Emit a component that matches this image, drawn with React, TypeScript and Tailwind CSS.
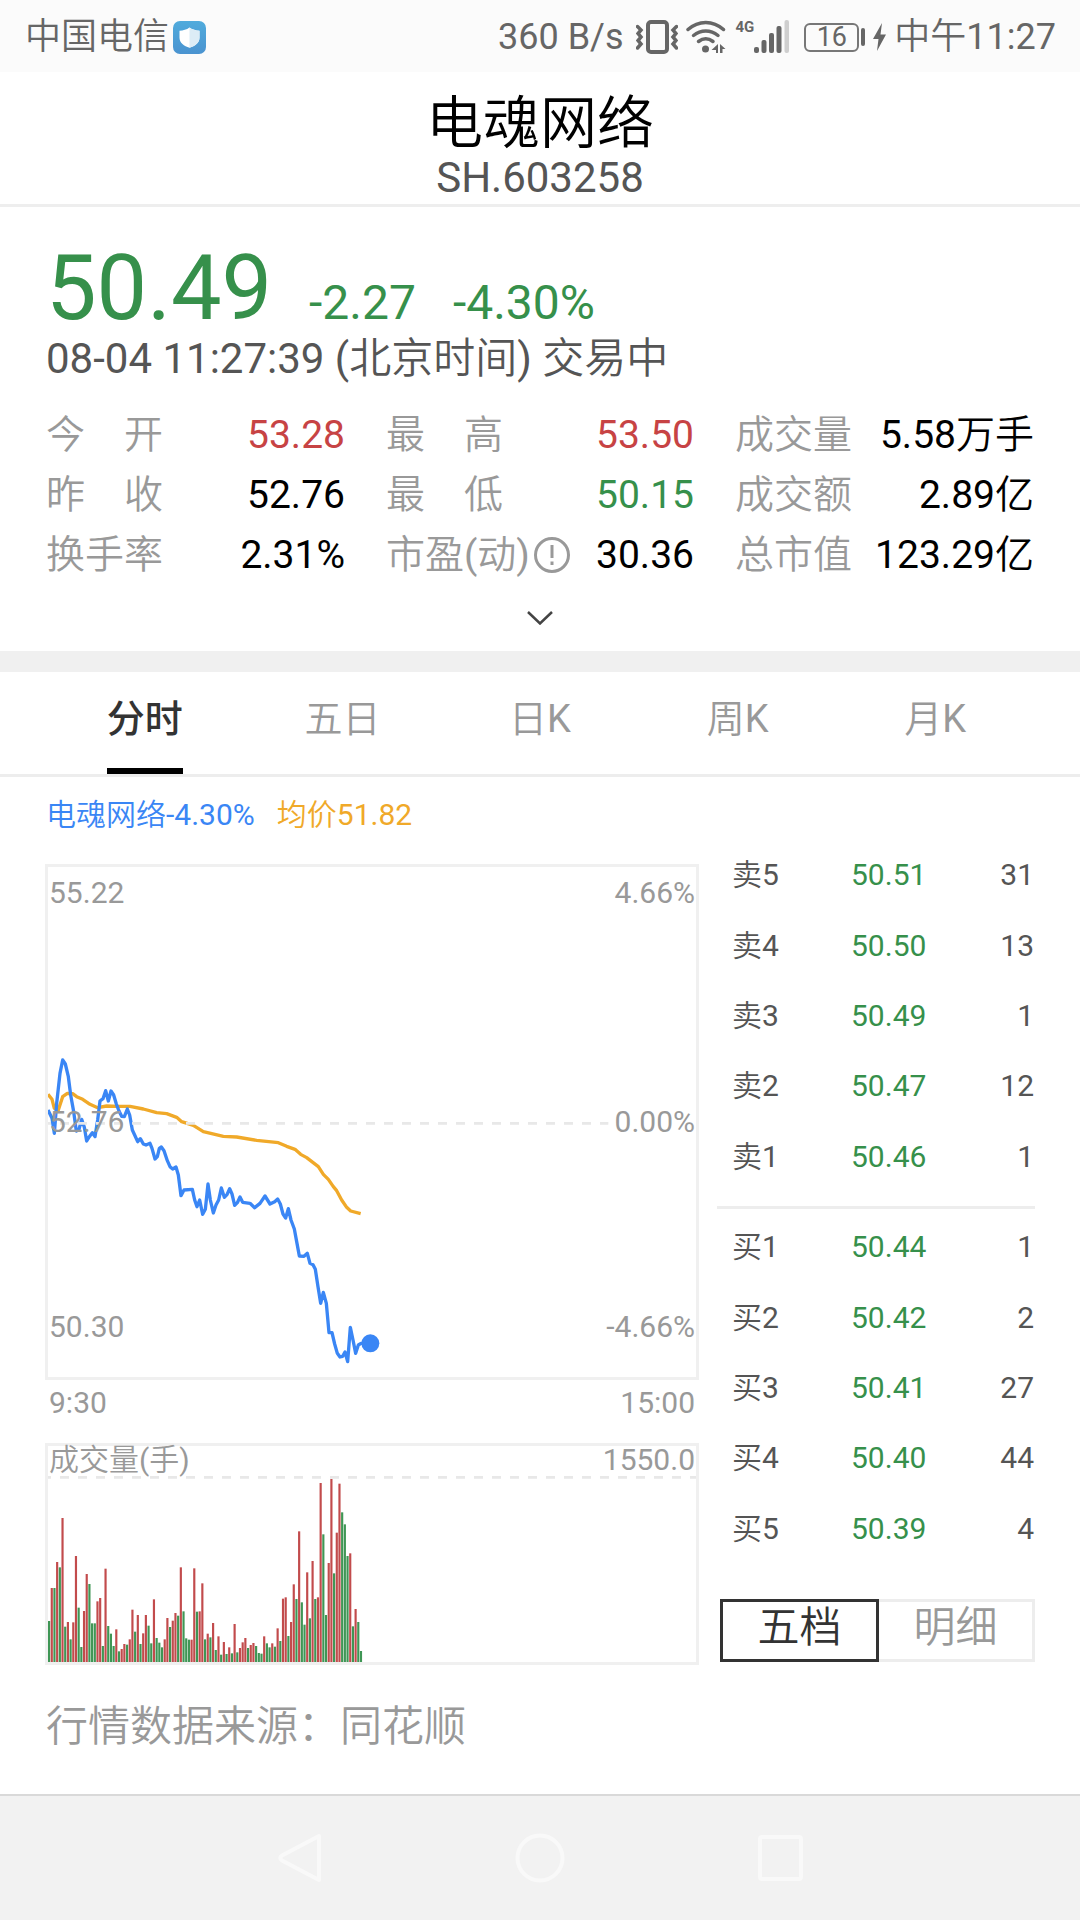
import { useState } from "react";
import { clsx } from "clsx";

type Tone = "up" | "down" | "flat";

const toneClass: Record<Tone, string> = {
  up: "text-[#c74344]",
  down: "text-[#36904b]",
  flat: "text-black",
};

const stats: { label: string; value: string; tone: Tone; info?: boolean }[] = [
  { label: "今　开", value: "53.28", tone: "up" },
  { label: "最　高", value: "53.50", tone: "up" },
  { label: "成交量", value: "5.58万手", tone: "flat" },
  { label: "昨　收", value: "52.76", tone: "flat" },
  { label: "最　低", value: "50.15", tone: "down" },
  { label: "成交额", value: "2.89亿", tone: "flat" },
  { label: "换手率", value: "2.31%", tone: "flat" },
  { label: "市盈(动)", value: "30.36", tone: "flat", info: true },
  { label: "总市值", value: "123.29亿", tone: "flat" },
];

const tabs = ["分时", "五日", "日K", "周K", "月K"];

const sells: [string, string, number][] = [
  ["卖5", "50.51", 31],
  ["卖4", "50.50", 13],
  ["卖3", "50.49", 1],
  ["卖2", "50.47", 12],
  ["卖1", "50.46", 1],
];

const buys: [string, string, number][] = [
  ["买1", "50.44", 1],
  ["买2", "50.42", 2],
  ["买3", "50.41", 27],
  ["买4", "50.40", 44],
  ["买5", "50.39", 4],
];

const priceLine =
  "54,210 66,235 73,280 80,190 90,100 98,60 106,72 115,110 122,165 131,215 139,273 147,268 155,238 163,262 170,303 178,290 187,278 195,290 203,240 210,183 219,176 227,152 235,183 243,153 251,165 259,192 267,213 275,229 283,230 292,207 299,225 307,270 315,287 323,305 331,296 340,312 348,315 360,310 366,325 375,357 382,350 388,325 394,321 402,332 412,362 420,380 428,387 438,381 445,405 453,467 462,450 487,448 494,480 501,500 509,480 518,523 526,508 534,432 541,480 550,519 558,495 566,480 574,444 583,472 591,464 599,446 606,462 614,496 622,488 630,471 638,487 660,490 674,503 690,490 705,468 720,492 734,485 743,477 751,492 759,522 767,534 775,506 783,540 793,567 801,610 808,648 822,649 832,640 840,670 849,674 856,688 864,740 872,790 880,757 889,790 897,878 906,878 914,912 922,940 930,951 938,949 945,936 953,965 961,862 969,900 977,940 985,915 993,910 1021,910";

const averageLine =
  "54,163 66,178 73,205 85,210 98,170 112,160 128,161 140,170 158,178 180,193 203,203 230,198 265,199 300,199 340,207 380,218 410,221 440,232 455,245 490,256 520,275 580,289 620,291 680,301 745,308 770,319 795,328 812,343 830,353 865,380 880,403 895,418 910,440 920,452 935,480 950,502 962,513 992,521";

// one entry per traded minute: r = up, g = down, then the bar height
const volumes =
  "g123 r222 g222 r300 g284 r432 g106 r120 g68 r119 r318 g163 g45 r153 r264 g234 g116 g116 r182 r192 g48 r280 g108 g85 g48 r98 g32 r39 r54 g52 r68 r157 g91 r141 g54 r86 r141 g109 g56 r188 g72 g58 g44 r68 r132 g105 r124 r147 g139 r284 g152 g71 g67 r67 r281 g151 r152 r236 g68 r85 g74 r117 g36 r77 g22 r60 g24 r44 g26 r114 g29 r42 r59 r72 g42 r51 r57 g48 g27 g25 r77 g56 g44 r56 g46 r101 g63 r190 r194 g78 r120 r233 g189 r392 g179 g112 r269 g131 r303 g189 r194 r537 g383 g141 r297 r549 g266 r388 r535 g449 g413 g318 r326 g107 r159 g120 g33"
    .split(" ")
    .map((v) => ({ up: v[0] === "r", height: Number(v.slice(1)) }));

function ShieldIcon() {
  return (
    <svg viewBox="0 0 33 33" className="size-[33px]" aria-hidden="true">
      <defs>
        <linearGradient id="shieldBg" x1="0" y1="0" x2="0" y2="1">
          <stop offset="0" stopColor="#50abdc" />
          <stop offset="1" stopColor="#4a93d0" />
        </linearGradient>
      </defs>
      <rect width="33" height="33" rx="7" fill="url(#shieldBg)" />
      <path d="M16.500 6.500c3 2.200 6.200 3 10 3.300v7c0 5-4.500 8.500-10 10-5.500-1.500-10-5-10-10v-7c3.800-.3 7-1.100 10-3.300z" fill="#fff" />
      <path d="M16.500 6.500c3 2.200 6.200 3 10 3.300v7c0 5-4.500 8.500-10 10z" fill="#dcecf6" />
    </svg>
  );
}

function VibrateIcon() {
  return (
    <svg viewBox="0 0 42 34" className="h-[34px] w-[42px]" fill="none" stroke="currentColor" aria-hidden="true">
      <rect x="12" y="2" width="19" height="30" rx="3" strokeWidth="4" />
      <path d="M1.500 6.500L5 10l-3 3.500 3 3.500-3 3.500L5 24l-3.500 4" strokeWidth="3.500" strokeLinecap="round" />
      <path d="M40.500 6.500L37 10l3 3.500-3 3.500 3 3.500-3 3.500 3.500 4" strokeWidth="3.500" strokeLinecap="round" />
    </svg>
  );
}

function WifiIcon() {
  return (
    <svg viewBox="0 0 40 34" className="h-[34px] w-10" fill="none" stroke="currentColor" strokeLinecap="round" aria-hidden="true">
      <path d="M2 9.500C12.500 0 27 0 37.500 9.500" strokeWidth="3.500" />
      <path d="M7.500 15.500c7.500-6 17-6 24.500 0" strokeWidth="3.500" />
      <path d="M12.500 21.500c4.500-3.500 10-3.500 14.500 0" strokeWidth="3.500" />
      <circle cx="19.500" cy="29" r="3.500" fill="currentColor" stroke="none" />
      <path d="M32 24v9h-2v-3h-4.500zM34 24l5.500 5H36.500v4H34z" fill="currentColor" stroke="none" />
    </svg>
  );
}

function SignalIcon() {
  return (
    <svg viewBox="0 0 36 34" className="h-[34px] w-9" fill="currentColor" aria-hidden="true">
      <rect x="0" y="27" width="5" height="6" rx="2" />
      <rect x="7.500" y="20" width="5" height="13" rx="2" />
      <rect x="15" y="13" width="5" height="20" rx="2" />
      <rect x="22.500" y="6" width="5" height="27" rx="2" />
      <rect x="30.500" y="0" width="4.500" height="33" rx="2" fill="#cfcfcf" />
    </svg>
  );
}

function BoltIcon() {
  return (
    <svg viewBox="0 0 13 28" className="h-7 w-[13px]" fill="currentColor" aria-hidden="true">
      <path d="M9 0L0 16h5.500L4 28l9-16.500H7.500z" />
    </svg>
  );
}

function StatusBar() {
  return (
    <div className="flex h-[72px] items-center justify-between bg-[#fbfbfb] pt-0.5 pr-6 pl-[25px] text-[36px] leading-[72px] text-[#666]">
      <div className="flex items-center gap-1">
        <span>中国电信</span>
        <ShieldIcon />
      </div>
      <div className="flex items-center">
        <span className="mr-3">360 B/s</span>
        <VibrateIcon />
        <span className="mr-2.5 ml-2">
          <WifiIcon />
        </span>
        <span className="self-start pt-[18px] text-[15px] leading-4 font-bold">4G</span>
        <SignalIcon />
        <span className="ml-3.5 flex h-[29px] w-[55px] items-center justify-center rounded-md border-2 border-[#777] text-[27px] leading-none">
          16
        </span>
        <span className="mr-2 ml-0.5 h-[18px] w-1 rounded-sm bg-[#666]" />
        <BoltIcon />
        <span className="ml-2">中午11:27</span>
      </div>
    </div>
  );
}

function Quote() {
  const [open, setOpen] = useState(false);

  return (
    <section className="px-[46px] pt-[42px]">
      <div className="flex items-baseline gap-[37px] text-[#36904b]">
        <span className="text-[90px] leading-[80px]">50.49</span>
        <span className="text-[48px] leading-[48px]">-2.27</span>
        <span className="text-[48px] leading-[48px]">-4.30%</span>
      </div>
      <p className="text-[42px] leading-[60px] text-[#555]">08-04 11:27:39 (北京时间) 交易中</p>
      <dl className="mt-4 grid grid-cols-[299fr_308fr_299fr] gap-x-[41px] text-[39px] leading-[60px]">
        {stats.map((s) => (
          <div key={s.label} className="flex justify-between whitespace-nowrap">
            <dt className="flex items-center text-[#999]">
              {s.label}
              {s.info && (
                <svg viewBox="0 0 36 36" className="ml-1 size-9" fill="none" stroke="currentColor" strokeWidth="3" aria-hidden="true">
                  <circle cx="18" cy="18" r="16.500" />
                  <path d="M18 8v13M18 24.500v3.500" />
                </svg>
              )}
            </dt>
            <dd className={toneClass[s.tone]}>{s.value}</dd>
          </div>
        ))}
      </dl>
      <button
        aria-label="展开"
        aria-expanded={open}
        onClick={() => setOpen(!open)}
        className="flex h-[66px] w-full items-center justify-center"
      >
        <svg viewBox="0 0 26 14" className="h-3.5 w-[26px]" fill="none" stroke="#444" strokeWidth="2.500" aria-hidden="true">
          <path d="M1 1l12 11.500L25 1" />
        </svg>
      </button>
    </section>
  );
}

function Tabs() {
  const [active, setActive] = useState("分时");

  return (
    <nav className="flex border-b-[3px] border-[#ededed] px-[46px]">
      {tabs.map((tab) => (
        <button key={tab} onClick={() => setActive(tab)} className="flex flex-1 justify-center text-[38px]">
          <span
            className={clsx(
              "flex h-[102px] items-center border-b-[6px] pb-0.5",
              tab === active
                ? "border-black font-[Roboto,'Noto_Sans_CJK_SC',sans-serif] font-medium text-[#333]"
                : "border-transparent text-[#999]",
            )}
          >
            {tab}
          </span>
        </button>
      ))}
    </nav>
  );
}

function PriceChart() {
  return (
    <div className="relative h-[516px] border-[3px] border-[#f0f0f0] text-[#999]">
      <svg viewBox="54 -519 1944 1530" preserveAspectRatio="none" className="size-full" fill="none" aria-hidden="true">
        <polyline points={averageLine} stroke="#f0a929" strokeWidth="10" strokeLinejoin="round" />
        <polyline points={priceLine} stroke="#3a86f5" strokeWidth="10" strokeLinejoin="round" />
        <circle cx="1021" cy="910" r="27" fill="#3a86f5" />
        <path d="M54 250H1735" stroke="#e8e8e8" strokeWidth="8" strokeDasharray="27 27" strokeDashoffset="18" />
      </svg>
      <div className="absolute inset-x-0 top-2 flex justify-between px-px">
        <span>55.22</span>
        <span>4.66%</span>
      </div>
      <div className="absolute inset-x-0 top-1/2 flex -translate-y-1/2 justify-between px-px">
        <span>52.76</span>
        <span>0.00%</span>
      </div>
      <div className="absolute inset-x-0 bottom-8 flex justify-between px-px">
        <span>50.30</span>
        <span>-4.66%</span>
      </div>
    </div>
  );
}

function VolumeChart() {
  return (
    <div className="relative h-[222px] border-[3px] border-[#f0f0f0] text-[#999]">
      <svg viewBox="0 0 1944 648" preserveAspectRatio="none" className="size-full" aria-hidden="true">
        <path d="M0 94H1944" stroke="#e8e8e8" strokeWidth="8" strokeDasharray="27 27" strokeDashoffset="18" />
        {volumes.map((v, i) => (
          <rect
            key={i}
            x={(i * 1944) / 241}
            y={648 - v.height}
            width="6.500"
            height={v.height}
            fill={v.up ? "#c24b4c" : "#3f9655"}
          />
        ))}
      </svg>
      <div className="absolute inset-x-0 top-0 flex justify-between px-px leading-7">
        <span>成交量(手)</span>
        <span>1550.0</span>
      </div>
    </div>
  );
}

function BookTable({ label, rows }: { label: string; rows: [string, string, number][] }) {
  return (
    <table aria-label={label} className="ml-[15px] h-[352px] w-[302px] table-fixed text-[#555]">
      <tbody>
        {rows.map(([name, price, qty]) => (
          <tr key={name}>
            <th scope="row" className="w-[119px] text-left font-normal">
              {name}
            </th>
            <td className="text-[#36904b]">{price}</td>
            <td className="w-20 text-right">{qty}</td>
          </tr>
        ))}
      </tbody>
    </table>
  );
}

function OrderBook() {
  const [mode, setMode] = useState("五档");

  return (
    <div className="pt-[7px]">
      <BookTable label="卖盘" rows={sells} />
      <hr className="mt-3.5 mb-[3px] border-t-[3px] border-[#ededed]" />
      <BookTable label="买盘" rows={buys} />
      <div className="mt-[35px] ml-[3px] flex">
        {["五档", "明细"].map((m) => (
          <button
            key={m}
            onClick={() => setMode(m)}
            className={clsx(
              "h-[63px] flex-1 border-[3px] pb-1.5 text-[42px] leading-[51px]",
              m === mode ? "border-[#333] text-[#333]" : "border-[#ededed] border-l-0 text-[#999]",
            )}
          >
            {m}
          </button>
        ))}
      </div>
    </div>
  );
}

function NavBar() {
  return (
    <div className="mt-auto flex h-[126px] items-center justify-center gap-[190px] border-t-2 border-[#d9d9d9] bg-[#f2f2f2]">
      <button aria-label="返回">
        <svg viewBox="0 0 50 50" className="size-[50px]" fill="none" stroke="#f9f9f9" strokeWidth="4" strokeLinejoin="round" aria-hidden="true">
          <path d="M44 3v44L7 27.500Q3.500 25 7 22.500z" />
        </svg>
      </button>
      <button aria-label="主屏幕">
        <svg viewBox="0 0 50 50" className="size-[50px]" fill="none" stroke="#f9f9f9" strokeWidth="4" aria-hidden="true">
          <circle cx="25" cy="25" r="22.500" />
        </svg>
      </button>
      <button aria-label="最近任务">
        <svg viewBox="0 0 50 50" className="size-[50px]" fill="none" stroke="#f9f9f9" strokeWidth="4" aria-hidden="true">
          <rect x="5" y="4" width="41" height="42" rx="2" />
        </svg>
      </button>
    </div>
  );
}

export default function App() {
  return (
    <div className="flex min-h-screen flex-col bg-white font-[Roboto,'Noto_Sans_CJK_SC_DemiLight','Noto_Sans_CJK_SC',sans-serif]">
      <StatusBar />
      <header className="border-b-[3px] border-[#eee] pt-[22px] pb-0.5 text-center">
        <h1 className="text-[57px] leading-[60px] text-black">电魂网络</h1>
        <p className="text-[42px] leading-[48px] text-[#555]">SH.603258</p>
      </header>
      <Quote />
      <div className="h-[21px] bg-[#f0f0f0]" />
      <Tabs />
      <main className="px-[45px] pt-5 text-[30px] leading-9">
        <div className="flex gap-[22px] pl-px">
          <span className="text-[#3a86f5]">电魂网络-4.30%</span>
          <span className="text-[#f0a929]">均价51.82</span>
        </div>
        <div className="grid grid-cols-[654fr_318fr] gap-[18px]">
          <div className="pt-[31px]">
            <PriceChart />
            <div className="mb-[17px] flex justify-between px-1 leading-[46px] text-[#999]">
              <span>9:30</span>
              <span>15:00</span>
            </div>
            <VolumeChart />
          </div>
          <OrderBook />
        </div>
        <p className="mt-8 pl-px text-[42px] leading-[60px] text-[#999]">行情数据来源：同花顺</p>
      </main>
      <NavBar />
    </div>
  );
}
